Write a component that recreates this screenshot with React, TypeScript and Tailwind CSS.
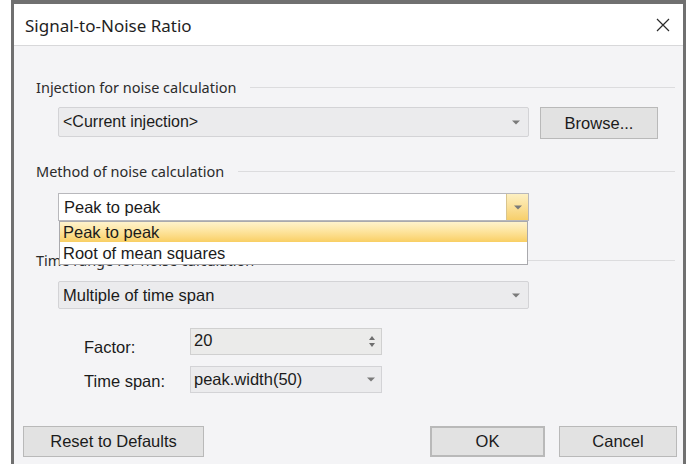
import React from "react";

const sans = { fontFamily: '"Noto Sans", "Open Sans", sans-serif' };

const Caret = ({ className = "" }: { className?: string }) => (
  <svg width="8" height="5" viewBox="0 0 8 5" className={className}>
    <path d="M0 0.5 H8 L4 4.5 Z" fill="#7a7a7a" />
  </svg>
);

const GroupHeader = ({ label }: { label: string }) => (
  <div className="flex items-center h-5 pl-[22px] pr-2">
    <span className="text-[14.5px] leading-5 text-[#2b2b2b]" style={sans}>
      {label}
    </span>
    <div className="flex-1 h-px bg-[#dcdcde] ml-[14px]" />
  </div>
);

const Combo = ({ value, className = "" }: { value: string; className?: string }) => (
  <div
    className={
      "flex items-center justify-between h-full bg-[#ebebed] border border-[#d3d3d6] rounded-[2px] pl-[4px] pr-[8px] text-[#1b1b1b] font-['Liberation_Sans',sans-serif] " +
      className
    }
  >
    <span>{value}</span>
    <Caret />
  </div>
);

const Button = ({
  children,
  className = "",
}: {
  children: React.ReactNode;
  className?: string;
}) => (
  <button
    className={
      "h-[31px] bg-[#e2e2e2] border border-[#b9b9b9] text-[16.5px] text-[#1b1b1b] font-['Liberation_Sans',sans-serif] " +
      className
    }
  >
    {children}
  </button>
);

export default function App() {
  return (
    <div className="w-[691px] h-[464px] bg-white overflow-hidden">
      <div className="ml-[11px] w-[675px] h-[464px] border-t-4 border-x-[3px] border-[#707070] flex flex-col">
        {/* title bar */}
        <div className="h-[42px] shrink-0 bg-white border-b border-[#d8d8da] flex items-center justify-between pl-[11px] pr-[13px]">
          <span className="text-[17px] text-[#1f1f1f] pt-[2px]" style={sans}>
            Signal-to-Noise Ratio
          </span>
          <svg width="14" height="14" viewBox="0 0 14 14">
            <path d="M1 1 L13 13 M13 1 L1 13" stroke="#2a2a2a" strokeWidth="1.2" />
          </svg>
        </div>

        {/* body */}
        <div className="flex-1 bg-[#f4f4f6] flex flex-col pt-[31px]">
          <GroupHeader label="Injection for noise calculation" />
          <div className="flex items-start h-[32px] mt-[10px] pl-[44px]">
            <div className="w-[471px] h-[30px]">
              <Combo value="<Current injection>" className="text-[16px]" />
            </div>
            <Button className="ml-[11px] w-[118px] h-[32px]">Browse...</Button>
          </div>

          <div className="mt-[22px]">
            <GroupHeader label="Method of noise calculation" />
          </div>
          <div className="relative shrink-0 mt-[12px] ml-[44px] w-[471px] h-[28px]">
            <div className="flex items-center h-full bg-white border border-[#b8b8bc] text-[16.5px] text-[#1b1b1b] font-['Liberation_Sans',sans-serif]">
              <span className="flex-1 pl-[5px]">Peak to peak</span>
              <div className="w-[22px] h-full flex items-center justify-center bg-gradient-to-b from-[#fdf0c2] to-[#f7cf6a] border-l border-[#d9c58e]">
                <Caret />
              </div>
            </div>
            {/* open list */}
            <div className="absolute left-[1px] top-[28px] w-[469px] h-[44px] bg-white border border-[#a9a9ad] z-10 flex flex-col text-[16.5px] text-[#1b1b1b] font-['Liberation_Sans',sans-serif]">
              <div className="h-[20px] leading-[20px] pl-[3px] bg-gradient-to-b from-[#fef2cc] via-[#fde39a] to-[#f9cf63]">
                Peak to peak
              </div>
              <div className="h-[20px] leading-[20px] pl-[3px] mt-[1px]">Root of mean squares</div>
            </div>
          </div>

          <div className="mt-[29px]">
            <GroupHeader label="Time range for noise calculation" />
          </div>
          <div className="shrink-0 mt-[11px] ml-[44px] w-[471px] h-[28px]">
            <Combo value="Multiple of time span" className="text-[16.5px]" />
          </div>

          {/* factor / time span */}
          <div className="grid grid-cols-[106px_192px] grid-rows-[27px_27px] gap-y-[11px] mt-[19px] ml-[70px] text-[16.5px] text-[#1b1b1b] font-['Liberation_Sans',sans-serif]">
            <span className="h-[27px] pt-[10px] leading-[18px]">Factor:</span>
            <div className="h-[27px] flex justify-between bg-[#ebebea] border border-[#d0d0d0] pl-[3px] pr-[6px]">
              <span className="leading-[20px] pt-[1px]">20</span>
              <div className="flex flex-col justify-center gap-[3px]">
                <svg width="6" height="4" viewBox="0 0 6 4">
                  <path d="M0 4 H6 L3 0 Z" fill="#6e6e6e" />
                </svg>
                <svg width="6" height="4" viewBox="0 0 6 4">
                  <path d="M0 0 H6 L3 4 Z" fill="#6e6e6e" />
                </svg>
              </div>
            </div>
            <span className="h-[27px] pt-[6px] leading-[18px]">Time span:</span>
            <div className="h-[27px] flex items-center justify-between bg-[#ebebed] border border-[#d3d3d6] pl-[3px] pr-[6px]">
              <span>peak.width(50)</span>
              <Caret />
            </div>
          </div>

          {/* buttons */}
          <div className="flex items-center mt-[33px] pl-[9px] pr-[6px]">
            <Button className="w-[181px]">Reset to Defaults</Button>
            <div className="flex-1" />
            <Button className="w-[115px] border-[#3a8ee6] border-2">OK</Button>
            <Button className="w-[118px] ml-[14px]">Cancel</Button>
          </div>
        </div>
      </div>
    </div>
  );
}
